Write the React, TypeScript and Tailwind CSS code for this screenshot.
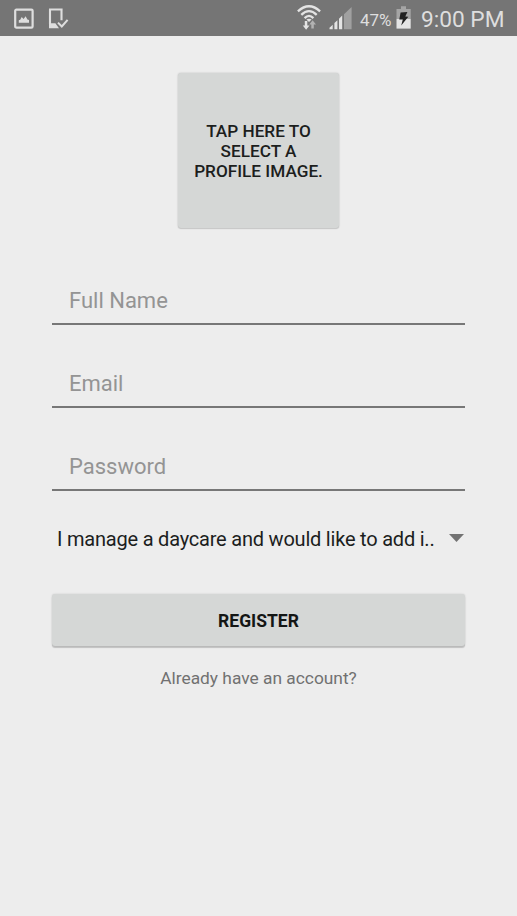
import React from "react";

function ImageIcon() {
  return (
    <svg width="20" height="22" viewBox="0 0 20 22" fill="none">
      <rect x="1.2" y="1.6" width="17.4" height="18" rx="1.2" stroke="#dedede" strokeWidth="2.2" />
      <path d="M4.8 14.8V12.3l1.4-.6 1.5-2.6 1.9 1.8 2-2.6 1.8 3.2 1.6.6v2.7Z" fill="#dedede" />
    </svg>
  );
}

function DeviceCheckIcon() {
  return (
    <svg width="21" height="22" viewBox="0 0 21 22" fill="none">
      <path d="M2 1.5V16M1 1.5h13.6M13.5 1.5v10.8" stroke="#dedede" strokeWidth="2.1" />
      <path d="M1 15.3h6.4l3.6 4.9H1Z" fill="#dedede" />
      <path d="m10 14.6 3.8 3.9 5.8-6.7" stroke="#dedede" strokeWidth="2" />
    </svg>
  );
}

function WifiIcon() {
  return (
    <svg width="24" height="26" viewBox="0 0 24 26" fill="none">
      <g stroke="#e4e4e4" strokeWidth="2.3">
        <path d="M.9 6.4Q12-3.8 23.1 6.4" />
        <path d="M4.3 9.8Q12 2.5 19.7 9.8" />
        <path d="M7.6 13.1Q12 8.7 16.4 13.1" />
      </g>
      <path d="M9.4 14.6Q12 12.8 14.6 14.6L12 17Z" fill="#e4e4e4" />
      <path d="M7.8 16v4.6H5.8l3.3 4.2 3.4-4.2h-2.2V16Z" fill="#e4e4e4" />
      <path d="M14.3 23.6v-4.2h-2l3.3-4.2 3.4 4.2h-2.2v4.2Z" fill="#b2b2b2" />
    </svg>
  );
}

function SignalIcon() {
  return (
    <svg width="24" height="24" viewBox="0 0 24 24">
      <path d="M.5 22.2v-1.4l3.2-3.1v4.5ZM5.4 22.2v-6.1l3-2.9v9ZM10 22.2V11.8l3.2-3.2v13.6Z" fill="#e4e4e4" />
      <path d="M15 22.2V7.3L22.6 0v22.2Z" fill="#a0a0a0" />
    </svg>
  );
}

function BatteryIcon() {
  return (
    <svg width="16" height="24" viewBox="0 0 16 24">
      <path d="M.5 3H5V.2h5V3h4.7v10H.5Z" fill="#a5a5a5" />
      <path d="M.5 13h14.2v9.6H.5Z" fill="#e4e4e4" />
      <path d="M4.6 6.4 11.4 6 9.3 10.5l3 .2L5.2 19.6l1.6-6.1-3.5.1Z" fill="#222" />
    </svg>
  );
}

function StatusBar() {
  return (
    <header className="flex h-9 items-start bg-[#757575] text-[#dedede]">
      <div className="flex gap-[14px] pl-[14px] pt-2">
        <ImageIcon />
        <DeviceCheckIcon />
      </div>
      <div className="ml-auto flex items-start pr-[12px]">
        <div className="mr-[8px] pt-[5px]"><WifiIcon /></div>
        <div className="mr-[7px] pt-[7px]"><SignalIcon /></div>
        <span className="mr-[4px] mt-[10px] w-8 whitespace-nowrap text-[17px] leading-5">47%</span>
        <div className="mr-[9px] pt-[6px]"><BatteryIcon /></div>
        <span className="mt-[6px] w-[84px] whitespace-nowrap text-[22.7px] leading-[27px]">9:00 PM</span>
      </div>
    </header>
  );
}

function Field({ label, type }: { label: string; type: string }) {
  return (
    <input
      type={type}
      placeholder={label}
      className="block h-[49px] w-full border-b-2 border-[#777777] bg-transparent px-[17px] pt-[1px] text-[22px] outline-none placeholder:text-[#949494] placeholder:opacity-100"
    />
  );
}

export default function App() {
  return (
    <div className="flex h-[916px] w-[517px] flex-col overflow-hidden bg-[#ededed] font-['Roboto',sans-serif]">
      <StatusBar />
      <main className="flex flex-col px-[52px] pt-[37px]">
        <button className="h-[155px] w-[161px] self-center rounded-[3px] bg-[#d5d7d6] text-[17.2px] font-medium leading-5 text-[#1c1e1d] shadow-[0_0_2px_rgba(0,0,0,0.2),0_1px_1px_rgba(0,0,0,0.12)]">
          TAP HERE TO<br />SELECT A<br />PROFILE IMAGE.
        </button>
        <form className="mt-[48px] flex flex-col gap-[34px]">
          <Field label="Full Name" type="text" />
          <Field label="Email" type="email" />
          <Field label="Password" type="password" />
        </form>
        <div className="mt-[33px] flex h-[30px] items-center pl-[5px] pr-[1px] text-[20px] text-[#1c1e1d]">
          <span className="whitespace-nowrap tracking-[-0.21px]">I manage a daycare and would like to add i..</span>
          <svg className="-mt-[2px] ml-auto" width="15" height="8" viewBox="0 0 15 8">
            <path d="M0 0h15L7.5 8Z" fill="#737373" />
          </svg>
        </div>
        <button className="mt-[40px] h-[52px] rounded-[3px] bg-[#d5d7d6] pt-[2px] text-[17.5px] font-bold text-[#141615] shadow-[0_0_2px_rgba(0,0,0,0.15),0_2px_1px_rgba(0,0,0,0.18)]">
          REGISTER
        </button>
        <a className="mt-[20px] self-center whitespace-nowrap text-[17.35px] leading-6 text-[#717171]">Already have an account?</a>
      </main>
    </div>
  );
}
